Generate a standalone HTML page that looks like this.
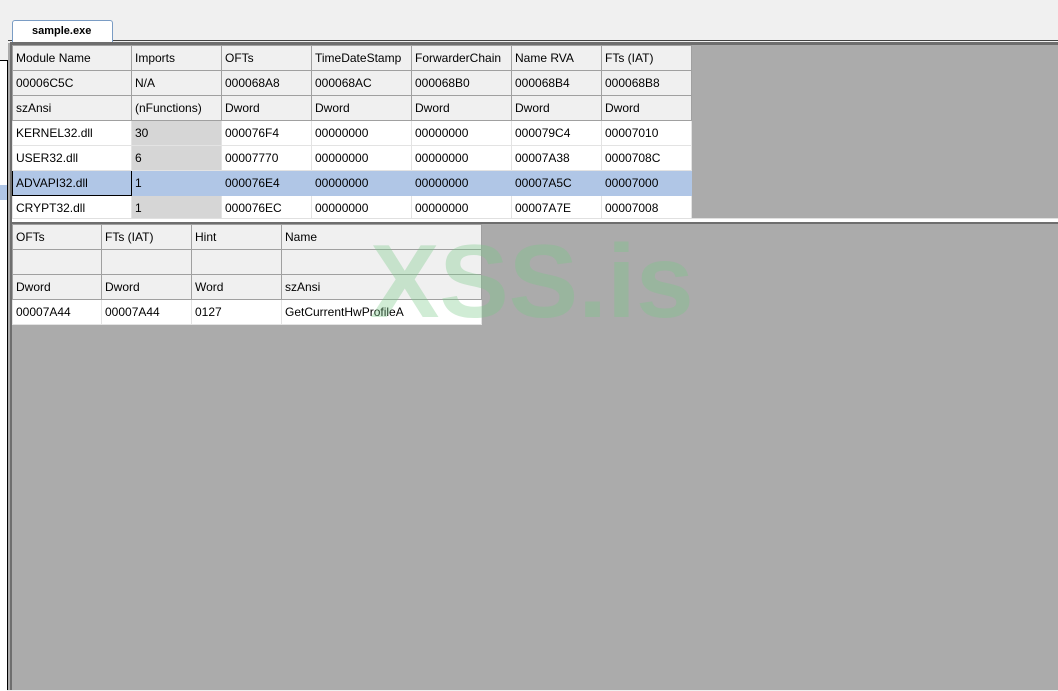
<!DOCTYPE html>
<html><head><style>
body{margin:0;width:1058px;height:690px;overflow:hidden;background:#f0f0f0;position:relative;font-family:"Liberation Sans",sans-serif;font-size:12px;color:#000}
.a{position:absolute}
table{border-collapse:collapse;position:absolute;table-layout:fixed}
td{height:24px;padding:0 0 0 3px;border:1px solid #a0a0a0;white-space:nowrap;overflow:hidden;background:#fff}
td.h{background:#f0f0f0}
td.d{border-color:#e3e3e3}
td.g{background:#d6d6d6;border-color:#e3e3e3}
tr.s td{background:#b0c6e6;border-color:#b0c6e6}
tr.s td.f{border:1px solid #000}
</style></head><body>
<div class="a" style="left:0;top:60px;width:7px;height:630px;background:#fff;border-top:1px solid #000"></div>
<div class="a" style="left:7px;top:60px;width:1px;height:630px;background:#000"></div>
<div class="a" style="left:0;top:185px;width:7px;height:15px;background:#b0c6e6"></div>
<div class="a" style="left:8px;top:40px;width:1050px;height:650px;background:#ababab"></div>
<div class="a" style="left:8px;top:40px;width:1050px;height:2px;background:#f0f0f0;border-top:1px solid #444"></div>
<div class="a" style="left:10px;top:42px;width:2px;height:648px;background:#6e6e6e"></div>
<div class="a" style="left:12px;top:42px;width:1046px;height:3px;background:#6e6e6e"></div>
<div class="a" style="left:12px;top:20px;width:99px;height:21px;background:#fff;border:1px solid #7a9cc4;border-bottom:none;border-radius:3px 3px 0 0;font-weight:bold;font-size:11px;line-height:21px;text-indent:19px">sample.exe</div>
<table style="left:12px;top:45px;width:680px">
<colgroup><col style="width:119px"><col style="width:90px"><col style="width:90px"><col style="width:100px"><col style="width:100px"><col style="width:90px"><col style="width:90px"></colgroup>
<tr><td class="h">Module Name</td><td class="h">Imports</td><td class="h">OFTs</td><td class="h">TimeDateStamp</td><td class="h">ForwarderChain</td><td class="h">Name RVA</td><td class="h">FTs (IAT)</td></tr>
<tr><td class="h">00006C5C</td><td class="h">N/A</td><td class="h">000068A8</td><td class="h">000068AC</td><td class="h">000068B0</td><td class="h">000068B4</td><td class="h">000068B8</td></tr>
<tr><td class="h">szAnsi</td><td class="h">(nFunctions)</td><td class="h">Dword</td><td class="h">Dword</td><td class="h">Dword</td><td class="h">Dword</td><td class="h">Dword</td></tr>
<tr><td class="d">KERNEL32.dll</td><td class="g">30</td><td class="d">000076F4</td><td class="d">00000000</td><td class="d">00000000</td><td class="d">000079C4</td><td class="d">00007010</td></tr>
<tr><td class="d">USER32.dll</td><td class="g">6</td><td class="d">00007770</td><td class="d">00000000</td><td class="d">00000000</td><td class="d">00007A38</td><td class="d">0000708C</td></tr>
<tr class="s"><td class="f">ADVAPI32.dll</td><td>1</td><td>000076E4</td><td>00000000</td><td>00000000</td><td>00007A5C</td><td>00007000</td></tr>
<tr><td class="d" style="height:21px">CRYPT32.dll</td><td class="g">1</td><td class="d">000076EC</td><td class="d">00000000</td><td class="d">00000000</td><td class="d">00007A7E</td><td class="d">00007008</td></tr>
</table>
<div class="a" style="left:12px;top:218px;width:1046px;height:4px;background:#fff;border-top:1px solid #e0e0e0"></div>
<div class="a" style="left:12px;top:222px;width:1046px;height:2px;background:#6e6e6e"></div>
<table style="left:12px;top:224px;width:469px">
<colgroup><col style="width:89px"><col style="width:90px"><col style="width:90px"><col style="width:200px"></colgroup>
<tr><td class="h">OFTs</td><td class="h">FTs (IAT)</td><td class="h">Hint</td><td class="h">Name</td></tr>
<tr><td class="h"></td><td class="h"></td><td class="h"></td><td class="h"></td></tr>
<tr><td class="h">Dword</td><td class="h">Dword</td><td class="h">Word</td><td class="h">szAnsi</td></tr>
<tr><td class="d">00007A44</td><td class="d">00007A44</td><td class="d">0127</td><td class="d">GetCurrentHwProfileA</td></tr>
</table>
<div class="a" style="left:370px;top:230px;font-size:104px;font-weight:bold;color:rgba(120,200,135,0.35);line-height:104px">XSS.is</div>
</body></html>
